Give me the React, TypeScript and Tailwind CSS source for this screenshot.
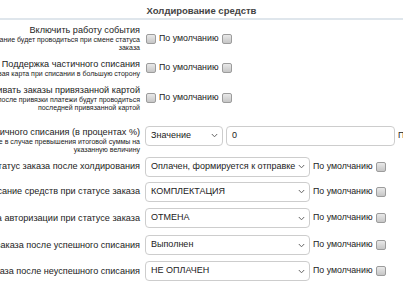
import React from "react";

function Box() {
  return (
    <span className="inline-block w-[10px] h-[10px] shrink-0 rounded-[2px] border border-[#9c9c9c] bg-gradient-to-b from-[#e9e9e9] to-[#c6c6c6]" />
  );
}

function Chevron() {
  return (
    <svg width="7" height="5" viewBox="0 0 7 5" className="shrink-0">
      <path d="M0.8 1 L3.5 3.8 L6.2 1" fill="none" stroke="#666" strokeWidth="1" />
    </svg>
  );
}

function Select({ text, w }: { text: string; w: string }) {
  return (
    <div
      className={`${w} h-[20px] shrink-0 flex items-center justify-between gap-[2px] rounded-[4px] border border-[#cdcdcd] bg-white pl-[5px] pr-[4px] text-[9px] text-[#222] whitespace-nowrap`}
    >
      <span>{text}</span>
      <Chevron />
    </div>
  );
}

function Default() {
  return (
    <div className="flex items-center gap-[3px] whitespace-nowrap text-[8.8px] text-[#222]">
      <span>По умолчанию</span>
      <Box />
    </div>
  );
}

function Label({ title, lines = [], extra = "" }: { title: string; lines?: string[]; extra?: string }) {
  return (
    <div className={`w-[300px] ml-[-160px] shrink-0 text-right whitespace-nowrap text-[#222] ${extra}`}>
      <div className="text-[9.1px] leading-[11px]">{title}</div>
      {lines.map((l) => (
        <div key={l} className="text-[7px] leading-[8px]">
          {l}
        </div>
      ))}
    </div>
  );
}

export default function App() {
  return (
    <div
      className="w-[403px] h-[294px] overflow-hidden bg-white"
      style={{ fontFamily: '"Liberation Sans", Arial, sans-serif' }}
    >
      <div className="h-[20px] border-b-2 border-[#dfe6ec] flex items-center justify-center pt-[5px] text-[9.5px] font-bold text-[#444]">
        Холдирование средств
      </div>

      <div className="flex items-center h-[37px]">
        <Label
          title="Включить работу события"
          lines={["Холдирование будет проводиться при смене статуса", "заказа"]}
        />
        <div className="ml-[6px] flex items-center gap-[3px]">
          <Box />
          <Default />
        </div>
      </div>

      <div className="flex items-center h-[22px]">
        <Label
          title="Поддержка частичного списания"
          lines={["Будет использоваться новая карта при списании в большую сторону"]}
        />
        <div className="ml-[6px] flex items-center gap-[3px]">
          <Box />
          <Default />
        </div>
      </div>

      <div className="flex items-center h-[38px]">
        <Label
          title="Оплачивать заказы привязанной картой"
          lines={["Все платежи после привязки платежи будут проводиться", "последней привязанной картой"]}
        />
        <div className="ml-[6px] flex items-center gap-[3px]">
          <Box />
          <Default />
        </div>
      </div>

      <div className="flex items-center h-[37px]">
        <Label
          title="Лимит частичного списания (в процентах %)"
          lines={["Допустимо списание в случае превышения итоговой суммы на", "указанную величину"]}
          extra="mt-[9px]"
        />
        <div className="ml-[5px] flex items-center gap-[3px] shrink-0">
          <Select text="Значение" w="w-[78px]" />
          <div className="w-[169px] h-[20px] shrink-0 flex items-center rounded-[4px] border border-[#cdcdcd] bg-white pl-[5px] text-[9px] text-[#222]">
            0
          </div>
          <Default />
        </div>
      </div>

      {[
        ["Статус заказа после холдирования", "Оплачен, формируется к отправке", "h-[25px]"],
        ["Списание средств при статусе заказа", "КОМПЛЕКТАЦИЯ", "h-[25px]"],
        ["Отмена авторизации при статусе заказа", "ОТМЕНА", "h-[28px]"],
        ["Статус заказа после успешного списания", "Выполнен", "h-[26px]"],
        ["Статус заказа после неуспешного списания", "НЕ ОПЛАЧЕН", "h-[26px]"],
      ].map(([label, value, h]) => (
        <div key={label} className={`flex items-center ${h}`}>
          <Label title={label} />
          <div className="ml-[5px] flex items-center gap-[3px]">
            <Select text={value} w="w-[165px]" />
            <Default />
          </div>
        </div>
      ))}
    </div>
  );
}
